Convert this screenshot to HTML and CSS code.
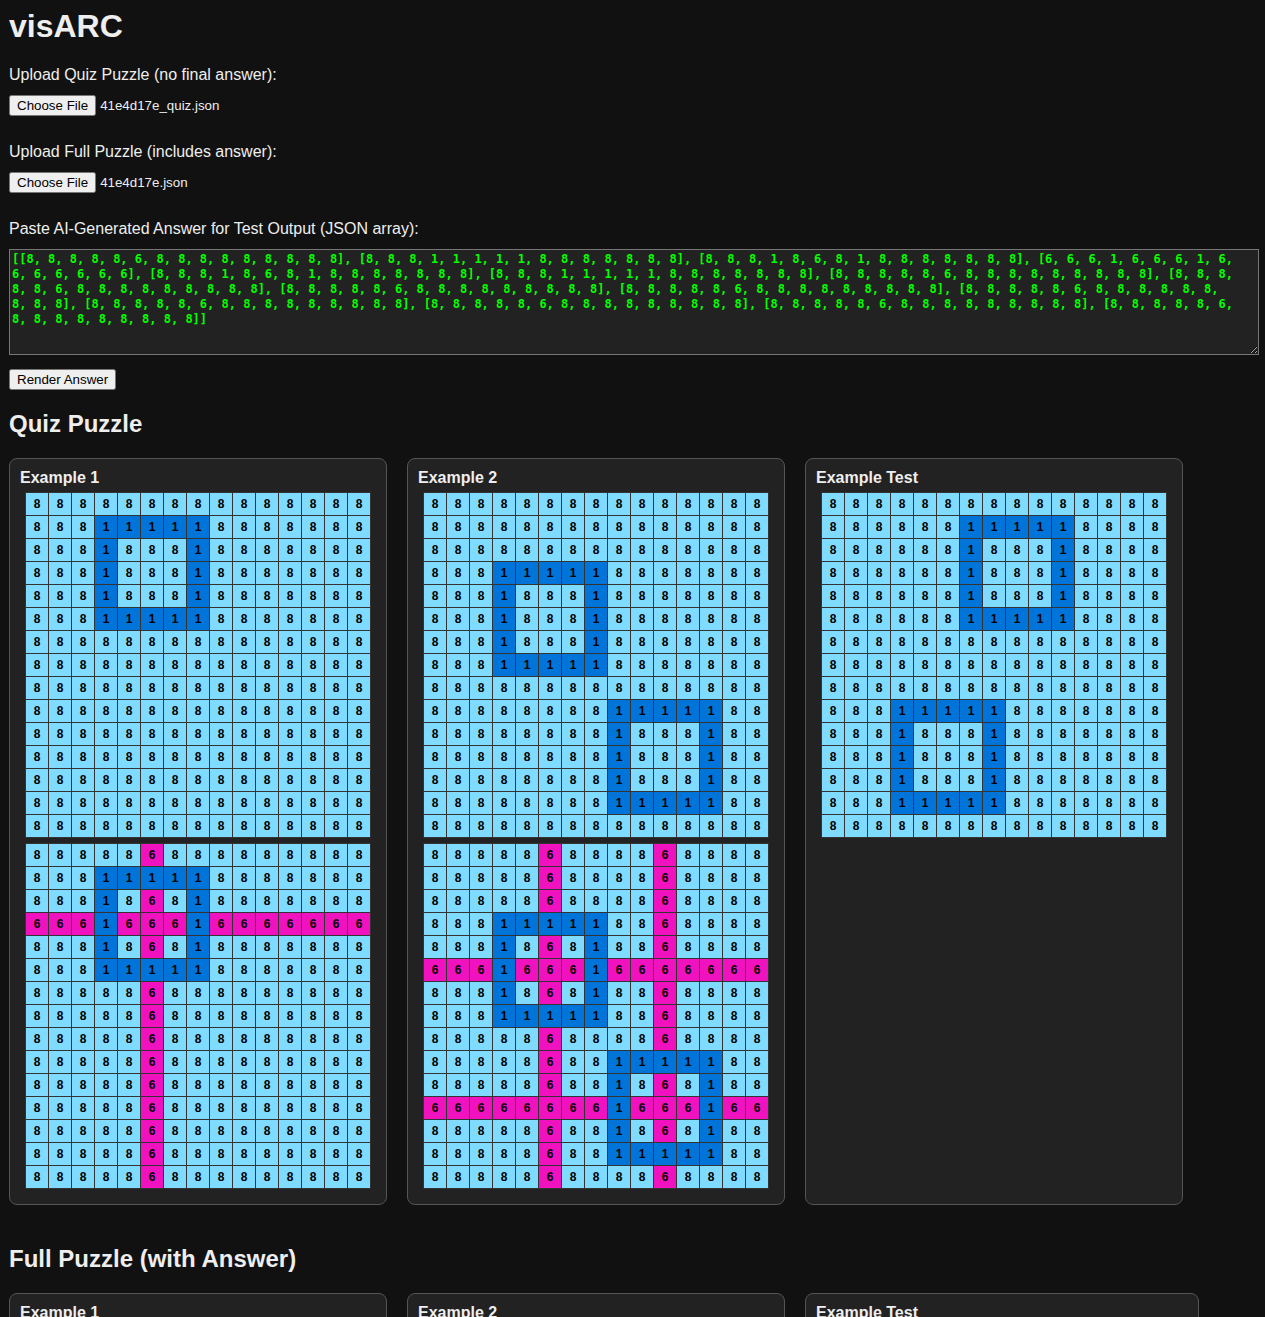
FILE: index.html
```html
<!DOCTYPE html>
<html lang="en">
<head>
  <meta charset="utf-8">
  <meta name="viewport" content="width=device-width, initial-scale=1">
  <title>visARC</title>
  <link rel="stylesheet" href="styles.css">
</head>
<body>
  <h1>visARC</h1>

  <form class="controls" id="controls">
    <div class="field">
      <label for="quizFile">Upload Quiz Puzzle (no final answer):</label>
      <input type="file" id="quizFile" accept=".json">
    </div>
    <div class="field">
      <label for="fullFile">Upload Full Puzzle (includes answer):</label>
      <input type="file" id="fullFile" accept=".json">
    </div>
    <div class="field">
      <label for="answer">Paste AI-Generated Answer for Test Output (JSON array):</label>
      <textarea id="answer" spellcheck="false">[[8, 8, 8, 8, 8, 6, 8, 8, 8, 8, 8, 8, 8, 8, 8], [8, 8, 8, 1, 1, 1, 1, 1, 8, 8, 8, 8, 8, 8, 8], [8, 8, 8, 1, 8, 6, 8, 1, 8, 8, 8, 8, 8, 8, 8], [6, 6, 6, 1, 6, 6, 6, 1, 6,
6, 6, 6, 6, 6, 6], [8, 8, 8, 1, 8, 6, 8, 1, 8, 8, 8, 8, 8, 8, 8], [8, 8, 8, 1, 1, 1, 1, 1, 8, 8, 8, 8, 8, 8, 8], [8, 8, 8, 8, 8, 6, 8, 8, 8, 8, 8, 8, 8, 8, 8], [8, 8, 8,
8, 8, 6, 8, 8, 8, 8, 8, 8, 8, 8, 8], [8, 8, 8, 8, 8, 6, 8, 8, 8, 8, 8, 8, 8, 8, 8], [8, 8, 8, 8, 8, 6, 8, 8, 8, 8, 8, 8, 8, 8, 8], [8, 8, 8, 8, 8, 6, 8, 8, 8, 8, 8, 8,
8, 8, 8], [8, 8, 8, 8, 8, 6, 8, 8, 8, 8, 8, 8, 8, 8, 8], [8, 8, 8, 8, 8, 6, 8, 8, 8, 8, 8, 8, 8, 8, 8], [8, 8, 8, 8, 8, 6, 8, 8, 8, 8, 8, 8, 8, 8, 8], [8, 8, 8, 8, 8, 6,
8, 8, 8, 8, 8, 8, 8, 8, 8]]</textarea>
    </div>
    <button type="button" class="render">Render Answer</button>
  </form>

  <section>
    <h2>Quiz Puzzle</h2>
    <div class="examples" id="quiz"></div>
  </section>

  <section>
    <h2>Full Puzzle (with Answer)</h2>
    <div class="examples" id="full"></div>
  </section>

  <script src="script.js"></script>
</body>
</html>
```
FILE: styles.css
```css
body {
  margin: 0;
  padding: 8px 6px 8px 9px;
  background: #111;
  color: #eee;
  font: 16px/18px "Liberation Sans", Arial, sans-serif;
}

h1 {
  margin: 0 0 21px;
  font-size: 32px;
  line-height: 37px;
}

h2 {
  margin: 0 0 21px;
  font-size: 24px;
  line-height: 27px;
}

.controls {
  display: flex;
  flex-direction: column;
  align-items: flex-start;
  margin-bottom: 20px;
}

.field {
  display: flex;
  flex-direction: column;
  align-items: flex-start;
  gap: 11px;
  width: 100%;
  margin-bottom: 27px;
}

.field:last-of-type {
  margin-bottom: 14px;
}

.field input {
  color: #eee;
  font-family: "Liberation Sans", Arial, sans-serif;
}

.field textarea {
  box-sizing: border-box;
  width: 100%;
  height: 106px;
  margin: 0;
  padding: 2px;
  border: 1px solid #767676;
  background: #222;
  color: #0f0;
  font: bold 12px/15px "DejaVu Sans Mono", "Liberation Mono", monospace;
  white-space: pre;
  overflow: auto;
}

.render {
  font-family: "Liberation Sans", Arial, sans-serif;
}

section {
  margin-bottom: 40px;
}

.examples {
  display: flex;
  flex-wrap: wrap;
  gap: 20px;
}

.example {
  padding: 10px;
  border: 1px solid #555;
  border-radius: 8px;
  background: #222;
}

.example h3 {
  margin: 0;
  font-size: 16px;
  line-height: 18px;
}

.result {
  padding: 0 8px;
}

.grid {
  margin: 5px;
  border-collapse: collapse;
}

.grid td {
  box-sizing: border-box;
  width: 23px;
  height: 23px;
  padding: 0;
  border: 1px solid #333;
  color: #000;
  font-size: 12px;
  font-weight: bold;
  line-height: 22px;
  text-align: center;
}

.c1 { background: #0074d9; }
.c6 { background: #f012be; }
.c8 { background: #7fdbff; }
```
FILE: script.js
```javascript
const SIZE = 15;

// Each puzzle is a list of 5x5 boxes, given as [top row, left column].
const puzzles = [
  { title: 'Example 1', boxes: [[1, 3]] },
  { title: 'Example 2', boxes: [[3, 3], [9, 8]] },
  { title: 'Example Test', boxes: [[1, 6], [9, 3]], test: true },
];

function cellValue(row, col, boxes, solved) {
  const onEdge = boxes.some(([top, left]) => {
    const r = row - top;
    const c = col - left;
    return r >= 0 && r <= 4 && c >= 0 && c <= 4 &&
      (r === 0 || r === 4 || c === 0 || c === 4);
  });
  if (onEdge) return 1;
  const onLine = boxes.some(([top, left]) => row === top + 2 || col === left + 2);
  return solved && onLine ? 6 : 8;
}

function createGrid(boxes, solved) {
  const table = document.createElement('table');
  table.className = 'grid';
  for (let row = 0; row < SIZE; row++) {
    const tr = table.insertRow();
    for (let col = 0; col < SIZE; col++) {
      const value = cellValue(row, col, boxes, solved);
      const td = tr.insertCell();
      td.className = 'c' + value;
      td.textContent = value;
    }
  }
  return table;
}

function renderPuzzles(target, withAnswer) {
  for (const { title, boxes, test } of puzzles) {
    const card = document.createElement('article');
    card.className = 'example';
    const heading = document.createElement('h3');
    heading.textContent = title;
    card.append(heading);

    const grids = document.createElement('div');
    if (test && withAnswer) grids.className = 'result';
    grids.append(createGrid(boxes, false));
    if (!test || withAnswer) grids.append(createGrid(boxes, true));
    card.append(grids);
    target.append(card);
  }
}

function selectFile(id, name) {
  const transfer = new DataTransfer();
  transfer.items.add(new File(['{}'], name, { type: 'application/json' }));
  document.getElementById(id).files = transfer.files;
}

selectFile('quizFile', '41e4d17e_quiz.json');
selectFile('fullFile', '41e4d17e.json');
renderPuzzles(document.getElementById('quiz'), false);
renderPuzzles(document.getElementById('full'), true);
```
